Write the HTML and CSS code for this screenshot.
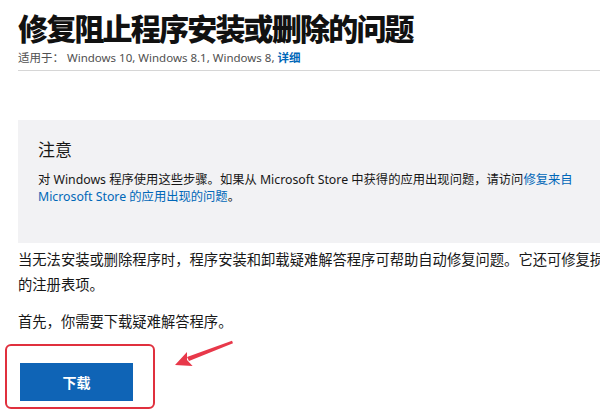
FILE: index.html
```html
<!DOCTYPE html>
<html lang="zh-CN">
<head>
    <meta charset="UTF-8">
    <meta name="viewport" content="width=device-width, initial-scale=1.0">
    <title>修复阻止程序安装或删除的问题</title>
    <link rel="stylesheet" href="styles.css">
</head>
<body>

    <div class="page">
        <!-- Header -->
        <h1 class="title">修复阻止程序安装或删除的问题</h1>
        <div class="applies">
            <span class="applies-label">适用于：</span>
            <span>Windows 10, Windows 8.1, Windows 8,</span>
            <a href="#" class="link strong">详细</a>
        </div>
        <hr class="rule">

        <!-- Note box -->
        <div class="note">
            <h2 class="note-title">注意</h2>
            <p class="note-text">对 Windows 程序使用这些步骤。如果从 Microsoft Store 中获得的应用出现问题，请访问<a href="#" class="link">修复来自 Microsoft Store 的应用出现的问题</a>。</p>
        </div>

        <p class="para">当无法安装或删除程序时，程序安装和卸载疑难解答程序可帮助自动修复问题。它还可修复损坏的注册表项。</p>
        <p class="para first">首先，你需要下载疑难解答程序。</p>

        <!-- Download button -->
        <div class="download-row">
            <div class="highlight">
                <button class="download">下载</button>
            </div>
            <svg class="arrow" width="80" height="40" viewBox="0 0 80 40">
                <polygon points="67,4.8 68,7.2 24,25 22,21" fill="#e8384a"/>
                <polygon points="10,29 22,16 22,24 27.6,30" fill="#e8384a"/>
            </svg>
        </div>
    </div>

</body>
</html>
```

FILE: styles.css
```css
html, body {
    margin: 0;
    overflow: hidden;
}
body {
    font-family: "Noto Sans", "Noto Sans CJK SC", sans-serif;
    background-color: white;
    color: #171717;
}
.page {
    width: 608px;
    padding: 0 0 0 18px;
}
.title {
    margin: 0;
    padding-top: 9px;
    font-size: 30px;
    line-height: 40px;
    font-weight: 900;
    letter-spacing: -1.8px;
    color: #111;
}
.applies {
    margin-top: 0;
    font-size: 11.5px;
    line-height: 18px;
    color: #505050;
}
.link {
    color: #0067b8;
    text-decoration: none;
}
.strong {
    font-weight: 700;
}
.rule {
    margin: 3px 0 0;
    border: none;
    border-top: 1px solid #d6d6d6;
}
.note {
    margin-top: 49px;
    padding: 18px 20px 38px 20px;
    background-color: #f2f2f4;
}
.note-title {
    margin: 0;
    font-size: 17px;
    line-height: 24px;
    font-weight: 400;
}
.note-text {
    margin: 9px 0 0;
    font-size: 12.3px;
    line-height: 17px;
}
.para {
    margin: 4px 0 0;
    font-size: 14.3px;
    line-height: 25px;
}
.para.first {
    margin-top: 12px;
}
.download-row {
    position: relative;
    margin-top: 10px;
}
.highlight {
    display: inline-block;
    margin-left: -13px;
    padding: 17px 20px 6px 13px;
    border: 2px solid #e0303e;
    border-radius: 6px;
}
.download {
    display: block;
    width: 113px;
    height: 38px;
    border: none;
    background-color: #0f64b6;
    color: white;
    font-family: "Noto Sans CJK SC", sans-serif;
    font-size: 14px;
    font-weight: 700;
}
.arrow {
    position: absolute;
    left: 147px;
    top: -8px;
}
```
